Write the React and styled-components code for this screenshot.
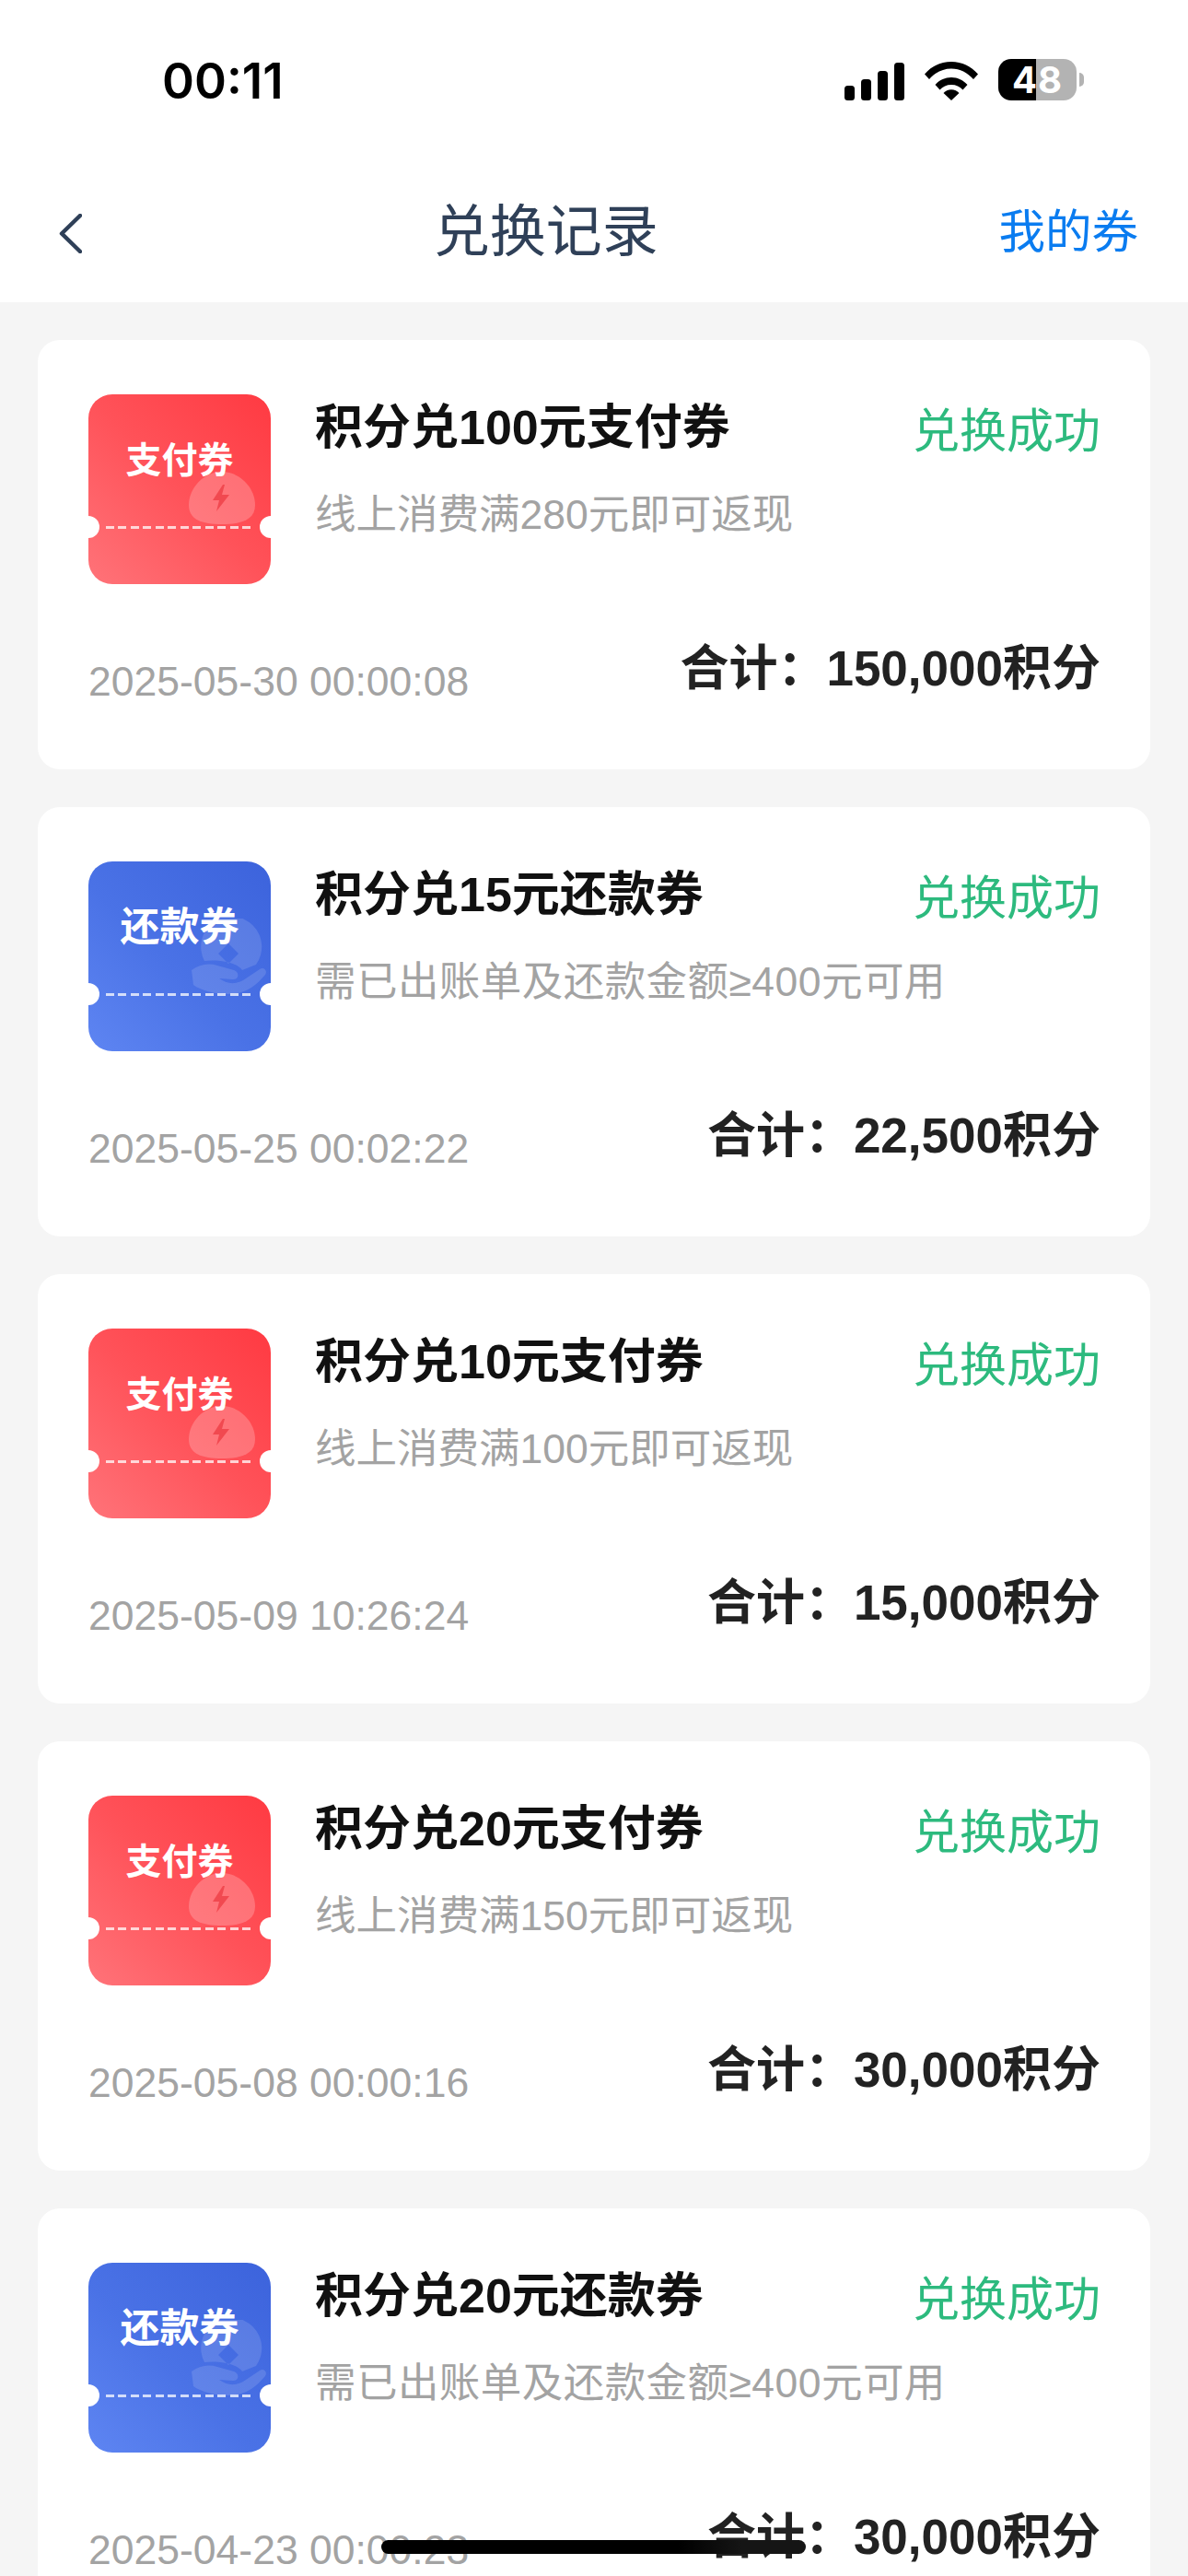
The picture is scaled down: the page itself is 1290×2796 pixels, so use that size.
import styled, { createGlobalStyle } from "styled-components";

const records = [
  { type: "pay", title: "积分兑100元支付券", desc: "线上消费满280元即可返现", date: "2025-05-30 00:00:08", total: "150,000" },
  { type: "repay", title: "积分兑15元还款券", desc: "需已出账单及还款金额≥400元可用", date: "2025-05-25 00:02:22", total: "22,500" },
  { type: "pay", title: "积分兑10元支付券", desc: "线上消费满100元即可返现", date: "2025-05-09 10:26:24", total: "15,000" },
  { type: "pay", title: "积分兑20元支付券", desc: "线上消费满150元即可返现", date: "2025-05-08 00:00:16", total: "30,000" },
  { type: "repay", title: "积分兑20元还款券", desc: "需已出账单及还款金额≥400元可用", date: "2025-04-23 00:00:23", total: "30,000" },
];

const App = () => {
  return (
    <Page>
      <GlobalStyle />
      <Header>
        <StatusBar>
          <Clock>00:11</Clock>
          <StatusIcons>
            <svg width="65" height="41" viewBox="0 0 65 41" fill="#000">
              <rect x="0" y="25" width="11" height="16" rx="3.5" />
              <rect x="18" y="18" width="11" height="23" rx="3.5" />
              <rect x="36" y="9" width="11" height="32" rx="3.5" />
              <rect x="54" y="0" width="11" height="41" rx="3.5" />
            </svg>
            <svg width="58" height="42" viewBox="0 0 58 42" fill="#000">
              <path d="M0 13.5C7.5 5 17.5 0 29 0s21.500 5 29 13.500l-5 5.500C46.500 11.800 38.500 7.500 29 7.500S11.500 11.800 5 19z" />
              <path d="M11.500 25C16 20 22 17 29 17s13 3 17.500 8l-5 5.500C38.500 27 34 25 29 25s-9.500 2-12.500 5.500z" />
              <path d="M20.500 34c2-2.300 5-3.800 8.500-3.800s6.500 1.500 8.500 3.800L29 42z" />
            </svg>
            <Battery>
              <BatteryLevel>48</BatteryLevel>
            </Battery>
          </StatusIcons>
        </StatusBar>
        <NavBar>
          <BackIcon width="25" height="43" viewBox="0 0 25 43" fill="none">
            <path d="M23 2 3 21.500 23 41" stroke="#2f4058" strokeWidth="4.500" strokeLinecap="round" strokeLinejoin="round" />
          </BackIcon>
          <NavTitle>兑换记录</NavTitle>
          <NavAction>我的券</NavAction>
        </NavBar>
      </Header>

      <List>
        {records.map((item) => (
          <Card key={item.date}>
            <CardTop>
              <Coupon type={item.type}>
                <CouponLabel type={item.type}>{item.type === "pay" ? "支付券" : "还款券"}</CouponLabel>
                {item.type === "pay" ? <PayMark /> : <RepayMark />}
                <CouponDash />
              </Coupon>
              <CardBody>
                <TitleRow>
                  <CardTitle>{item.title}</CardTitle>
                  <Status>兑换成功</Status>
                </TitleRow>
                <CardDesc type={item.type}>{item.desc}</CardDesc>
              </CardBody>
            </CardTop>
            <CardFooter>
              <DateText>{item.date}</DateText>
              <Total>合计：{item.total}积分</Total>
            </CardFooter>
          </Card>
        ))}
      </List>

      <HomeIndicator />
    </Page>
  );
};

export default App;

const PayMark = () => (
  <MarkSvg $right={17} $top={84} width="72" height="58" viewBox="0 0 72 58">
    <path d="M36 0c20 0 36 18 36 36 0 16-14 21-36 21S0 52 0 36C0 18 16 0 36 0z" fill="#fff" fillOpacity=".22" />
    <path d="M37 14 26 31h7l-3 12 14-18h-8l3-11z" fill="#ee4249" fillOpacity=".85" />
  </MarkSvg>
);

const RepayMark = () => (
  <MarkSvg $right={4} $top={62} width="82" height="84" viewBox="0 0 82 84">
    <path
      fillRule="evenodd"
      d="M14 46A33 33 0 1 1 70 50L55 56C50 48 30 44 14 46zM40 27 29 38 40 49 51 38z"
      fill="#fff"
      fillOpacity=".13"
    />
    <path d="M0 56C8 50 18 48 28 51L46 56C52 58 52 66 45 66L30 65C40 72 48 71 56 67L74 55C78 52 83 56 80 61 70 73 58 82 40 82 25 82 10 78 2 72z" fill="#fff" fillOpacity=".13" />
  </MarkSvg>
);

const GlobalStyle = createGlobalStyle`
  html, body {
    margin: 0;
    padding: 0;
    background: #f5f5f5;
    font-family: "Liberation Sans", "Noto Sans CJK SC", sans-serif;
  }
`;

const Page = styled.div`
  position: relative;
  width: 1290px;
  height: 2796px;
  overflow: hidden;
  background: #f5f5f5;
`;

const Header = styled.header`
  height: 328px;
  background: #ffffff;
`;

const StatusBar = styled.div`
  height: 168px;
  box-sizing: border-box;
  padding: 61px 121px 0 176px;
  display: flex;
  justify-content: space-between;
  align-items: flex-start;
`;

const Clock = styled.span`
  font-family: "Inter", sans-serif;
  font-size: 53px;
  font-weight: 600;
  line-height: 54px;
  color: #000000;
`;

const StatusIcons = styled.div`
  display: flex;
  align-items: flex-end;
  gap: 22px;
  padding-top: 3px;
`;

const Battery = styled.div`
  position: relative;
  width: 85px;
  height: 45px;
  border-radius: 14px;
  background: linear-gradient(90deg, #000000 48%, #b3b3b3 48%);
  display: flex;
  align-items: center;
  justify-content: center;

  &::after {
    content: "";
    position: absolute;
    right: -8px;
    top: 15px;
    width: 5px;
    height: 15px;
    border-radius: 0 5px 5px 0;
    background: #b3b3b3;
  }
`;

const BatteryLevel = styled.span`
  font-family: "Inter", sans-serif;
  font-size: 40px;
  font-weight: 700;
  line-height: 45px;
  letter-spacing: 1px;
  color: #ffffff;
`;

const NavBar = styled.nav`
  height: 160px;
  box-sizing: border-box;
  padding: 0 54px 0 64px;
  display: flex;
  align-items: center;
  justify-content: space-between;
`;

const BackIcon = styled.svg`
  display: block;
  margin-top: 10px;
`;

const NavTitle = styled.h1`
  margin: 0 0 0 12px;
  padding-top: 7px;
  font-size: 61px;
  font-weight: 400;
  line-height: 158px;
  color: #2f4058;
`;

const NavAction = styled.span`
  padding-top: 7px;
  font-size: 50.5px;
  line-height: 158px;
  color: #0a7cf0;
`;

const List = styled.main`
  padding: 41px 41px 0;
  display: flex;
  flex-direction: column;
  gap: 41px;
`;

const Card = styled.article`
  height: 466px;
  box-sizing: border-box;
  padding: 59px 54px 0 55px;
  background: #ffffff;
  border-radius: 24px;
  display: flex;
  flex-direction: column;
`;

const CardTop = styled.div`
  display: flex;
  gap: 48px;
`;

const Coupon = styled.div`
  position: relative;
  flex: none;
  width: 198px;
  height: 206px;
  border-radius: 26px;
  overflow: hidden;
  background: ${(p) =>
    p.type === "pay"
      ? "linear-gradient(225deg, #ff3a42 0%, #ff5259 50%, #ff7379 100%)"
      : "linear-gradient(225deg, #3c63dc 0%, #4a72e6 55%, #5e85f2 100%)"};
  text-align: center;

  &::before,
  &::after {
    content: "";
    position: absolute;
    top: 132px;
    width: 24px;
    height: 24px;
    border-radius: 50%;
    background: #ffffff;
  }

  &::before {
    left: -12px;
  }

  &::after {
    right: -12px;
  }
`;

const CouponLabel = styled.div`
  position: relative;
  z-index: 1;
  padding-top: ${(p) => (p.type === "pay" ? "44px" : "43px")};
  font-size: ${(p) => (p.type === "pay" ? "39px" : "43px")};
  font-weight: 700;
  line-height: 56px;
  color: #ffffff;
`;

const MarkSvg = styled.svg`
  position: absolute;
  right: ${(p) => p.$right}px;
  top: ${(p) => p.$top}px;
`;

const CouponDash = styled.div`
  position: absolute;
  left: 19px;
  right: 22px;
  top: 143px;
  height: 3px;
  background: repeating-linear-gradient(90deg, rgba(255, 255, 255, 0.75) 0 9px, transparent 9px 13.500px);
`;

const CardBody = styled.div`
  flex: 1;
  min-width: 0;
`;

const TitleRow = styled.div`
  display: flex;
  justify-content: space-between;
  align-items: flex-start;
`;

const CardTitle = styled.h2`
  margin: 0;
  font-size: 52px;
  font-weight: 700;
  line-height: 73px;
  color: #111111;
`;

const Status = styled.span`
  font-size: 51px;
  line-height: 81px;
  color: #2dba7e;
`;

const CardDesc = styled.p`
  margin: 20px 0 0;
  font-size: 44.500px;
  line-height: 60px;
  letter-spacing: ${(p) => (p.type === "repay" ? "0.45px" : "0")};
  color: #a3a3a3;
`;

const CardFooter = styled.div`
  margin-top: 62px;
  display: flex;
  justify-content: space-between;
  align-items: flex-start;
`;

const DateText = styled.span`
  margin-top: 14px;
  font-size: 44.500px;
  line-height: 60px;
  color: #a3a3a3;
`;

const Total = styled.span`
  font-size: 53px;
  font-weight: 700;
  line-height: 60px;
  color: #222222;
`;

const HomeIndicator = styled.div`
  position: absolute;
  left: 414px;
  top: 2757px;
  width: 461px;
  height: 15px;
  border-radius: 8px;
  background: linear-gradient(90deg, #000000 70%, #151515 85%);
`;
